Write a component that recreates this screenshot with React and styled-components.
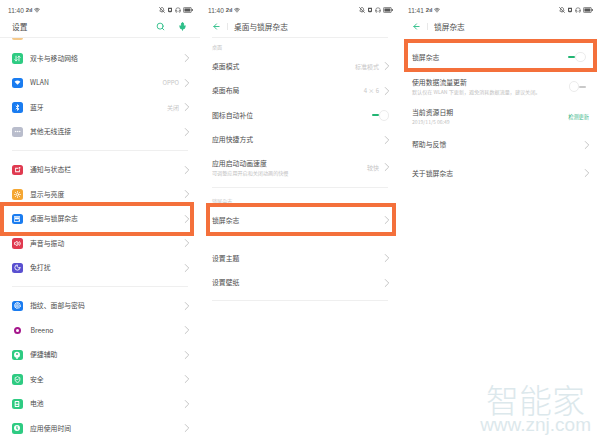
import React from "react";
import styled, { createGlobalStyle } from "styled-components";
import { Search, Mic, ArrowLeft, ChevronRight, Wifi, Bluetooth, Ellipsis, ArrowDownUp, Sun, Volume2, Moon, Fingerprint, Headphones, BellOff, ShieldCheck } from "lucide-react";

const GlobalStyle = createGlobalStyle`
  html, body {
    margin: 0;
    padding: 0;
    background: #fff;
    overflow: hidden;
  }
  body {
    font-family: "Noto Sans CJK SC", "Liberation Sans", sans-serif;
    color: #4a4a4a;
  }
`;

const Page = styled.div`
  position: relative;
  display: grid;
  grid-template-columns: repeat(3, 200px);
  width: 600px;
  height: 444px;
  overflow: hidden;
  background: #fff;
`;

const Panel = styled.section`
  display: flex;
  flex-direction: column;
  min-width: 0;
`;

const StatusBar = styled.div`
  display: flex;
  align-items: center;
  justify-content: space-between;
  height: 20px;
  padding: 0 7px 0 8px;
  font-family: "Liberation Sans", sans-serif;
  font-size: 6.5px;
  color: #555;
`;

const StatusGroup = styled.div`
  display: flex;
  align-items: center;
  gap: 2px;
`;

const Signal = styled.span`
  font-weight: 700;
  font-size: 6px;
`;

const TitleBar = styled.div`
  display: flex;
  align-items: center;
  box-sizing: border-box;
  height: 17px;
  margin: 0 12px;
  padding-bottom: 4px;
  color: #444;
`;

const TitleText = styled.div`
  font-size: 7.7px;
  line-height: 13px;
  flex: 1;
  color: #4d4d4d;
`;

const BackDivider = styled.span`
  width: 1px;
  height: 7px;
  background: #e8e8e8;
  margin: 0 6px 0 6px;
`;

const TitleActions = styled.div`
  display: flex;
  align-items: center;
  gap: 13px;
  margin-right: 1px;
  color: #2fbf8a;
`;

const Rule = styled.div`
  height: 1px;
  flex: none;
  margin: ${(p) => p.$margin || "0 12px"};
  background: #efefef;
`;

const List = styled.div`
  display: flex;
  flex-direction: column;
`;

const Row = styled.div`
  display: flex;
  align-items: center;
  flex: none;
  height: ${(p) => p.$height || 24.5}px;
  padding: 0 8px 0 12px;
`;

const PeekRow = styled.div`
  display: flex;
  height: 8px;
  padding-left: 12px;
  flex: none;
`;

const PeekTile = styled.span`
  width: 10.5px;
  height: 2px;
  border-radius: 0 0 2.5px 2.5px;
  background: #f5c98a;
`;

const Tile = styled.span`
  display: flex;
  align-items: center;
  justify-content: center;
  flex: none;
  width: 10.5px;
  height: 10.5px;
  margin-right: 7.5px;
  border-radius: 2.5px;
  background: ${(p) => p.$color};
  color: #fff;
`;

const Dot = styled.span`
  flex: none;
  width: 7px;
  height: 7px;
  margin: 0 9.75px 0 1.75px;
  box-sizing: border-box;
  border-radius: 50%;
  border: 2px solid #a5168c;
`;

const RowText = styled.div`
  flex: 1;
  min-width: 0;
`;

const Label = styled.div`
  font-size: 6.85px;
  line-height: 9px;
  color: #4c4c4c;
  white-space: nowrap;
`;

const Hint = styled.div`
  font-size: 5.1px;
  line-height: 7px;
  margin-top: 1px;
  color: #c2c2c2;
  white-space: nowrap;
`;

const Value = styled.span`
  font-size: 6px;
  color: #c6c6c6;
  margin-right: 3px;
`;

const LinkValue = styled.span`
  font-size: 5.2px;
  color: #45b98c;
  margin-right: 3px;
`;

const Chevron = styled(ChevronRight)`
  flex: none;
  width: 14px;
  height: 14px;
  margin: 0 -2px 0 -2px;
  color: #bcbcbc;
`;

const Toggle = styled.span`
  display: flex;
  align-items: center;
  flex: none;
  flex-direction: ${(p) => (p.$on ? "row" : "row-reverse")};
  margin-right: ${(p) => p.$inset || 3}px;

  &::before {
    content: "";
    width: 7px;
    height: 2px;
    border-radius: 1px;
    background: ${(p) => (p.$on ? "#22b573" : "#c9c9c9")};
  }

  &::after {
    content: "";
    box-sizing: border-box;
    width: 10.5px;
    height: 10.5px;
    border-radius: 50%;
    background: #fff;
    border: 0.5px solid #ececec;
  }
`;

const GroupHead = styled.div`
  flex: none;
  box-sizing: border-box;
  height: ${(p) => p.$height}px;
  padding: ${(p) => p.$top}px 0 0 12px;
  font-size: 5.1px;
  line-height: 7px;
  color: #c4c4c4;
`;

const Spacer = styled.div`
  height: ${(p) => p.$size}px;
  flex: none;
`;

const Highlight = styled.div`
  position: absolute;
  box-sizing: border-box;
  border: 4.7px solid #f4703b;
  left: ${(p) => p.$x}px;
  top: ${(p) => p.$y}px;
  width: ${(p) => p.$w}px;
  height: ${(p) => p.$h}px;
`;

const Watermark = styled.div`
  position: absolute;
  right: 9px;
  bottom: 11px;
  display: flex;
  flex-direction: column;
  align-items: center;
  color: #dce8ec;
  font-family: "Liberation Sans", sans-serif;
`;

const WatermarkName = styled.div`
  font-family: "Noto Sans CJK SC", sans-serif;
  font-size: 33px;
  font-weight: 300;
  line-height: 33px;
`;

const WatermarkUrl = styled.div`
  font-size: 19px;
  line-height: 17px;
`;

const Glyph = ({ size = 7, children }) => (
  <svg width={size} height={size} viewBox="0 0 24 24" fill="currentColor">
    {children}
  </svg>
);

const WifiGlyph = () => (
  <Glyph>
    <path d="M12 20 2 9c6-5 14-5 20 0z" />
  </Glyph>
);

const NoticeGlyph = () => (
  <Glyph>
    <path d="M4 6h11v3H7v9h10v-6h3v9H4z" />
    <circle cx="19" cy="6" r="3" />
  </Glyph>
);

const PictureGlyph = () => (
  <Glyph size={8}>
    <path d="M3 4h18v16H3zm2 2v12h11l3-4V6z" fillRule="evenodd" />
    <path d="M6 7h12v6H6z" />
  </Glyph>
);

const AssistGlyph = () => (
  <Glyph size={8}>
    <circle cx="12" cy="11" r="9" />
    <rect x="9" y="19" width="6" height="4" />
    <circle cx="12" cy="9" r="3" fill="#2ecb82" />
  </Glyph>
);

const ShieldGlyph = () => <ShieldCheck size={7} strokeWidth={3} />;

const CellGlyph = () => (
  <Glyph size={8}>
    <path d="M7 3h10a2 2 0 0 1 2 2v14a2 2 0 0 1-2 2H7a2 2 0 0 1-2-2V5a2 2 0 0 1 2-2zm1 3v5h8V6zm0 8v4h8v-4z" fillRule="evenodd" />
  </Glyph>
);

const TimerGlyph = () => (
  <Glyph size={8}>
    <circle cx="12" cy="12" r="9" />
    <path d="M10 7h4l-1 5 3 3-3 2-3-3z" fill="#2ecb82" />
  </Glyph>
);

const PadGlyph = () => (
  <svg width="6" height="6" viewBox="0 0 24 24" fill="#555">
    <path d="M4 3h16v13a5 5 0 0 1-5 5H9a5 5 0 0 1-5-5zm4 5v7h8V8z" fillRule="evenodd" />
  </svg>
);

const BatteryIcon = () => (
  <svg width="10" height="6" viewBox="0 0 10 6">
    <rect x="0.4" y="0.4" width="8" height="5.2" rx="1.2" fill="none" stroke="#555" strokeWidth="0.7" />
    <rect x="1.4" y="1.4" width="6" height="3.2" fill="#555" />
    <rect x="8.8" y="2" width="1" height="2" fill="#555" />
  </svg>
);

const lucide = (Icon) => () => <Icon size={7} strokeWidth={3} />;

const Status = ({ time }) => (
  <StatusBar>
    <StatusGroup>
      <span>{time}</span>
      <Signal>2ıl</Signal>
      <Wifi size={6} strokeWidth={3} />
    </StatusGroup>
    <StatusGroup>
      <BellOff size={6} strokeWidth={3} />
      <PadGlyph />
      <Headphones size={6} strokeWidth={2.5} />
      <BatteryIcon />
    </StatusGroup>
  </StatusBar>
);

const SubTitle = ({ title }) => (
  <TitleBar>
    <ArrowLeft size={9} strokeWidth={2.5} color="#2fbf8a" />
    <BackDivider />
    <TitleText>{title}</TitleText>
  </TitleBar>
);

const IconRow = ({ icon: Icon, color, label, value }) => (
  <Row>
    <Tile $color={color}>
      <Icon />
    </Tile>
    <RowText>
      <Label>{label}</Label>
    </RowText>
    {value && <Value>{value}</Value>}
    <Chevron strokeWidth={1.5} />
  </Row>
);

const TextRow = ({ label, hint, value, height }) => (
  <Row $height={height}>
    <RowText>
      <Label>{label}</Label>
      {hint && <Hint>{hint}</Hint>}
    </RowText>
    {value && <Value>{value}</Value>}
    <Chevron strokeWidth={1.5} />
  </Row>
);

const ToggleRow = ({ label, hint, on, height, inset }) => (
  <Row $height={height}>
    <RowText>
      <Label>{label}</Label>
      {hint && <Hint>{hint}</Hint>}
    </RowText>
    <Toggle $on={on} $inset={inset} />
  </Row>
);

export default function App() {
  return (
    <>
      <GlobalStyle />
      <Page>
        <Panel>
          <Status time="11:40" />
          <TitleBar>
            <TitleText>设置</TitleText>
            <TitleActions>
              <Search size={9} strokeWidth={2.5} />
              <Mic size={9} strokeWidth={2.5} fill="currentColor" />
            </TitleActions>
          </TitleBar>
          <Rule $margin="0" />
          <PeekRow>
            <PeekTile />
          </PeekRow>
          <List>
            <IconRow icon={lucide(ArrowDownUp)} color="#2ecb82" label="双卡与移动网络" />
            <IconRow icon={WifiGlyph} color="#1a7cf0" label="WLAN" value="OPPO" />
            <IconRow icon={lucide(Bluetooth)} color="#1a7cf0" label="蓝牙" value="关闭" />
            <IconRow icon={lucide(Ellipsis)} color="#b9bdcc" label="其他无线连接" />
          </List>
          <Spacer $size={6} />
          <Rule />
          <Spacer $size={6.5} />
          <List>
            <IconRow icon={NoticeGlyph} color="#e03a50" label="通知与状态栏" />
            <IconRow icon={lucide(Sun)} color="#f5a733" label="显示与亮度" />
            <IconRow icon={PictureGlyph} color="#1a7cf0" label="桌面与锁屏杂志" />
            <IconRow icon={lucide(Volume2)} color="#e03a50" label="声音与振动" />
            <IconRow icon={lucide(Moon)} color="#5a50d0" label="免打扰" />
          </List>
          <Spacer $size={6} />
          <Rule />
          <Spacer $size={6.5} />
          <List>
            <IconRow icon={lucide(Fingerprint)} color="#1a7cf0" label="指纹、面部与密码" />
            <Row>
              <Dot />
              <RowText>
                <Label>Breeno</Label>
              </RowText>
              <Chevron strokeWidth={1.5} />
            </Row>
            <IconRow icon={AssistGlyph} color="#2ecb82" label="便捷辅助" />
            <IconRow icon={ShieldGlyph} color="#2ecb82" label="安全" />
            <IconRow icon={CellGlyph} color="#2ecb82" label="电池" />
            <IconRow icon={TimerGlyph} color="#2ecb82" label="应用使用时间" />
          </List>
        </Panel>

        <Panel>
          <Status time="11:40" />
          <SubTitle title="桌面与锁屏杂志" />
          <Rule />
          <GroupHead $height={16} $top={4.5}>桌面</GroupHead>
          <List>
            <TextRow label="桌面模式" value="标准模式" />
            <TextRow label="桌面布局" value="4 × 6" />
            <ToggleRow label="图标自动补位" on />
            <TextRow label="应用快捷方式" />
            <TextRow label="应用启动动画速度" hint="可调整应用开启和关闭动画的快慢" value="较快" height={30} />
          </List>
          <Spacer $size={5} />
          <Rule />
          <GroupHead $height={17} $top={8.5}>锁屏杂志</GroupHead>
          <List>
            <TextRow label="锁屏杂志" height={30} />
          </List>
          <Spacer $size={10.75} />
          <List>
            <TextRow label="设置主题" />
            <TextRow label="设置壁纸" />
          </List>
          <Spacer $size={5} />
          <Rule />
        </Panel>

        <Panel>
          <Status time="11:41" />
          <SubTitle title="锁屏杂志" />
          <Spacer $size={5.5} />
          <List>
            <ToggleRow label="锁屏杂志" on height={29} inset={6.5} />
            <ToggleRow label="使用数据流量更新" hint="默认仅在 WLAN 下更新，避免消耗数据流量，建议关闭。" height={30} inset={6} />
            <Row $height={29}>
              <RowText>
                <Label>当前资源日期</Label>
                <Hint>2019/11/5 06:49</Hint>
              </RowText>
              <LinkValue>检测更新</LinkValue>
            </Row>
            <TextRow label="帮助与反馈" height={28} />
            <TextRow label="关于锁屏杂志" height={29} />
          </List>
        </Panel>

        <Highlight $x={0} $y={202} $w={194} $h={34} />
        <Highlight $x={206} $y={203} $w={190} $h={33} />
        <Highlight $x={404} $y={39} $w={193} $h={33} />
        <Watermark>
          <WatermarkName>智能家</WatermarkName>
          <WatermarkUrl>www.znj.com</WatermarkUrl>
        </Watermark>
      </Page>
    </>
  );
}
